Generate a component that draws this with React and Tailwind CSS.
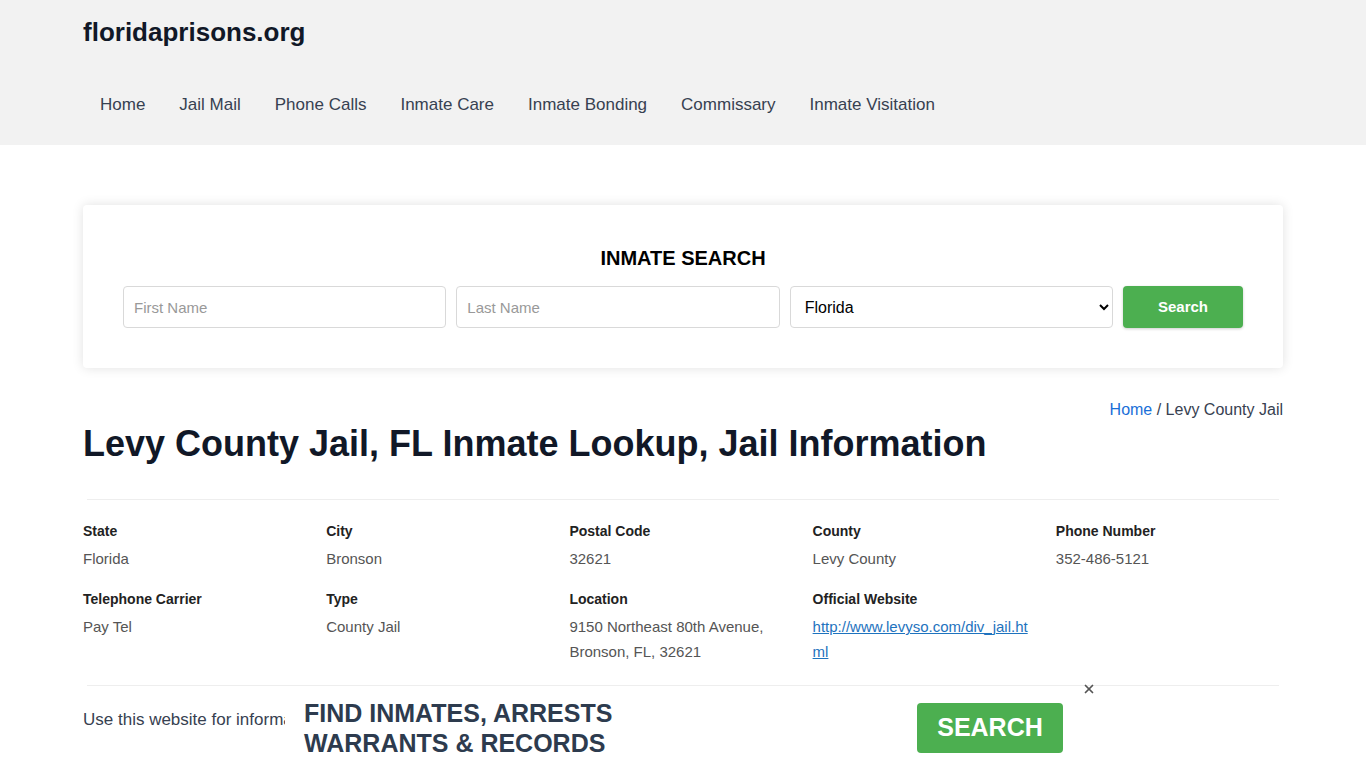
import { X } from 'lucide-react';

const navLinks = ['Home', 'Jail Mail', 'Phone Calls', 'Inmate Care', 'Inmate Bonding', 'Commissary', 'Inmate Visitation'];

const details = [
  { label: 'State', value: 'Florida' },
  { label: 'City', value: 'Bronson' },
  { label: 'Postal Code', value: '32621' },
  { label: 'County', value: 'Levy County' },
  { label: 'Phone Number', value: '352-486-5121' },
  { label: 'Telephone Carrier', value: 'Pay Tel' },
  { label: 'Type', value: 'County Jail' },
  { label: 'Location', value: '9150 Northeast 80th Avenue, Bronson, FL, 32621' },
  { label: 'Official Website', value: 'http://www.levyso.com/div_jail.html', link: true },
];

const App = () => {
  return (
    <div className="min-h-screen bg-white font-['Liberation_Sans',Arial,sans-serif] text-[#374151]">
      {/* Header */}
      <header className="bg-[#f2f2f2]">
        <div className="w-[1200px] mx-auto">
          <div className="py-4 text-[26px] leading-8 font-bold text-[#111827]">floridaprisons.org</div>
          <nav className="flex mt-[29px] pb-[28px]">
            {navLinks.map((link) => (
              <a key={link} href="#" className="px-[17px] text-[17px] leading-6 text-[#374151]">
                {link}
              </a>
            ))}
          </nav>
        </div>
      </header>

      <main className="w-[1200px] mx-auto">
        {/* Search card */}
        <section className="mt-[60px] bg-white rounded shadow-[0_0_12px_rgba(0,0,0,0.12)] px-10 pt-[39px] pb-10">
          <h2 className="text-center text-[20px] leading-7 font-bold text-black mb-[14px]">INMATE SEARCH</h2>
          <div className="grid grid-cols-[1fr_1fr_1fr_120px] gap-[10px]">
            <input
              className="h-[42px] border border-[#d9d9d9] rounded px-[10px] text-[15px] placeholder:text-[#999] outline-none"
              placeholder="First Name"
            />
            <input
              className="h-[42px] border border-[#d9d9d9] rounded px-[10px] text-[15px] placeholder:text-[#999] outline-none"
              placeholder="Last Name"
            />
            <select className="h-[42px] border border-[#d9d9d9] rounded px-[10px] text-[16px] text-black bg-white outline-none">
              <option>Florida</option>
            </select>
            <button className="h-[42px] rounded bg-[#4caf50] text-white font-bold text-[15px] shadow-[0_1px_3px_rgba(0,0,0,0.2)]">
              Search
            </button>
          </div>
        </section>

        {/* Breadcrumb */}
        <div className="mt-[30px] text-right text-[16px] leading-6 text-[#374151]">
          <a href="#" className="text-[#1a6fd8]">Home</a> / Levy County Jail
        </div>

        <h1 className="text-[36px] leading-[44px] font-bold text-[#111827]">
          Levy County Jail, FL Inmate Lookup, Jail Information
        </h1>

        {/* Details */}
        <div className="mt-[33px] border-t border-[#eeeeee] mx-[4px]"></div>
        <div className="grid grid-cols-5 gap-x-4 gap-y-[18px] pt-[21px] pb-[21px]">
          {details.map((item) => (
            <div key={item.label}>
              <div className="text-[14px] leading-5 font-bold text-[#222] mb-[5px]">{item.label}</div>
              {item.link ? (
                <a href="#" className="block text-[15px] leading-[25px] text-[#1e73be] underline break-all">
                  {item.value}
                </a>
              ) : (
                <div className="text-[15px] leading-[25px] text-[#555]">{item.value}</div>
              )}
            </div>
          ))}
        </div>
        <div className="border-t border-[#eeeeee] mx-[4px]"></div>

        <p className="mt-[22px] text-[17px] leading-6 text-[#374151] pb-10">
          Use this website for information purposes only. Levy County Jail inmate records and details are public information.
        </p>
      </main>

      {/* Bottom ad banner */}
      <div className="fixed left-[285px] top-[692px] w-[815px] h-[76px] bg-white">
        <button className="absolute right-[4px] -top-[10px] text-[#555]">
          <X className="w-[14px] h-[14px]" strokeWidth={3} />
        </button>
        <div className="flex items-start pl-[19px] pt-[6px]">
          <div className="w-[613px] text-[25px] leading-[30px] font-bold text-[#2d3b4e]">
            FIND INMATES, ARRESTS
            <br />
            WARRANTS &amp; RECORDS
          </div>
          <button className="mt-[5px] w-[146px] h-[50px] rounded bg-[#4caf50] text-white font-bold text-[25px]">
            SEARCH
          </button>
        </div>
      </div>
    </div>
  );
};

export default App;
